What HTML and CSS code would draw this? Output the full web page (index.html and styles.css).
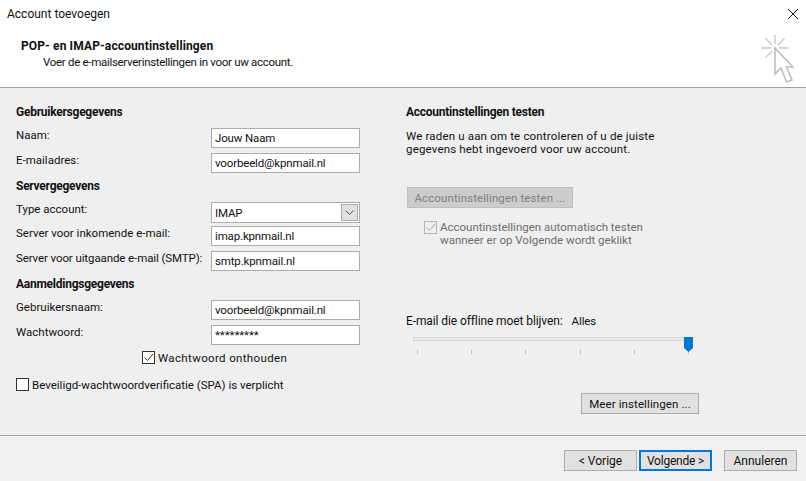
FILE: index.html
```html
<!DOCTYPE html>
<html lang="nl">
<head>
<meta charset="utf-8">
<title>Account toevoegen</title>
<link rel="stylesheet" href="styles.css">
</head>
<body>
<div class="dialog">
  <header class="top">
    <div class="titlebar">
      <span class="title">Account toevoegen</span>
      <svg class="close" width="10" height="10" viewBox="0 0 10 10"><path d="M0 0L10 10M10 0L0 10" stroke="#111" stroke-width="1" fill="none"/></svg>
    </div>
    <div class="intro">
      <div class="intro-text">
        <h1>POP- en IMAP-accountinstellingen</h1>
        <p>Voer de e-mailserverinstellingen in voor uw account.</p>
      </div>
      <svg class="cursor" width="34" height="50" viewBox="0 0 34 50">
        <path d="M1 14H11M19 14H28M15 1V10M5.500 4.500L12 11M24.500 4.500L18 11M5.500 23.500L12 17" stroke="#c4c4c4" stroke-width="1.300" fill="none"/>
        <path d="M15 14V40L21 34L26.500 48L32 46L26.500 33L33 33Z" stroke="#bdbdbd" stroke-width="1.600" fill="#fff"/>
      </svg>
    </div>
  </header>
  <main class="panel">
    <section class="left">
      <h2 class="first">Gebruikersgegevens</h2>
      <div class="row"><label>Naam:</label><div class="field">Jouw Naam</div></div>
      <div class="row gap5"><label>E-mailadres:</label><div class="field">voorbeeld@kpnmail.nl</div></div>
      <h2>Servergegevens</h2>
      <div class="row"><label>Type account:</label>
        <div class="field select"><span>IMAP</span>
          <span class="arrow"><svg width="9" height="5" viewBox="0 0 9 5"><path d="M0.500 0.500L4.500 4.500L8.500 0.500" stroke="#555" fill="none"/></svg></span>
        </div>
      </div>
      <div class="row gap3"><label>Server voor inkomende e-mail:</label><div class="field">imap.kpnmail.nl</div></div>
      <div class="row gap5"><label class="tight">Server voor uitgaande e-mail (SMTP):</label><div class="field">smtp.kpnmail.nl</div></div>
      <h2>Aanmeldingsgegevens</h2>
      <div class="row"><label>Gebruikersnaam:</label><div class="field">voorbeeld@kpnmail.nl</div></div>
      <div class="row gap5"><label>Wachtwoord:</label><div class="field stars">*********</div></div>
      <div class="check remember">
        <span class="box"><svg width="11" height="11" viewBox="0 0 11 11"><path d="M1.500 5.500L4.500 8.500L10 2" stroke="#333" fill="none"/></svg></span>
        <span class="check-text wide">Wachtwoord onthouden</span>
      </div>
      <div class="check spa">
        <span class="box"></span>
        <span class="check-text">Beveiligd-wachtwoordverificatie (SPA) is verplicht</span>
      </div>
    </section>
    <section class="right">
      <h2 class="first">Accountinstellingen testen</h2>
      <p class="desc">We raden u aan om te controleren of u de juiste<br>gegevens hebt ingevoerd voor uw account.</p>
      <div class="btn disabled test">Accountinstellingen testen ...</div>
      <div class="check auto">
        <span class="box"><svg width="11" height="11" viewBox="0 0 11 11"><path d="M1.500 5.500L4.500 8.500L10 2" stroke="#a8a8a8" fill="none"/></svg></span>
        <span>Accountinstellingen automatisch testen<br>wanneer er op Volgende wordt geklikt</span>
      </div>
      <div class="offline"><span class="offline-label">E-mail die offline moet blijven:</span><span class="offline-value">Alles</span></div>
      <div class="slider">
        <div class="track"></div>
        <svg class="thumb" width="9" height="15" viewBox="0 0 9 15"><path d="M0 0H9V11L4.500 15L0 11Z" fill="#0078d7"/></svg>
        <div class="ticks"><i></i><i></i><i></i><i></i><i></i><i></i></div>
      </div>
      <div class="more"><div class="btn more-btn">Meer instellingen ...</div></div>
    </section>
  </main>
  <footer class="bottom">
    <div class="btn nav">&lt; Vorige</div>
    <div class="btn nav primary">Volgende &gt;</div>
    <div class="btn nav cancel">Annuleren</div>
  </footer>
</div>
</body>
</html>
```
FILE: styles.css
```css
* { box-sizing: border-box; }
html, body { margin: 0; padding: 0; }
body {
  width: 806px;
  height: 481px;
  overflow: hidden;
  font-family: Roboto, "Noto Sans", "Liberation Sans", sans-serif;
  font-size: 11.5px;
  line-height: 16px;
  color: #111;
  background: #f0f0f0;
}
.dialog { display: flex; flex-direction: column; height: 481px; }

.top { height: 88px; background: #fff; border-bottom: 1px solid #a0a0a0; }
.titlebar { display: flex; justify-content: space-between; align-items: center; height: 28px; padding: 0 8px 0 7px; }
.title { font-size: 12px; }
.intro { display: flex; justify-content: space-between; }
.intro-text { padding: 10px 0 0 21px; }
.intro h1 { margin: 0; font-size: 12px; font-weight: 700; line-height: 16px; letter-spacing: 0.12px; }
.intro p { margin: 1px 0 0 22px; line-height: 15px; letter-spacing: -0.3px; }
.cursor { margin: 6px 12px 0 0; }

.panel { display: flex; height: 348px; background: #efefef; border-bottom: 1px solid #a0a0a0; }
.left { width: 360px; padding: 16px 0 0 16px; white-space: nowrap; }
.right { width: 446px; padding: 16px 0 0 46px; white-space: nowrap; }

h2 { margin: 5px 0 8px; font-size: 12px; font-weight: 700; line-height: 16px; letter-spacing: -0.25px; }
h2.first { margin-top: 0; }

.row { display: flex; justify-content: space-between; }
.gap5 { margin-top: 5px; }
.gap3 { margin-top: 3px; }
.row label { line-height: 15px; }
.tight { letter-spacing: -0.1px; }
.field {
  flex: none;
  width: 149px;
  height: 20px;
  padding: 0 3px;
  display: flex;
  align-items: center;
  letter-spacing: -0.15px;
  background: #fff;
  border: 1px solid #ababab;
}
.stars { letter-spacing: -0.1px; }
.select { height: 21px; justify-content: space-between; padding-right: 1px; }
.arrow { width: 17px; height: 17px; display: flex; align-items: center; justify-content: center; background: #e1e1e1; border: 1px solid #adadad; }

.check { display: flex; align-items: flex-start; gap: 3px; line-height: 13px; }
.check-text { padding-top: 1px; }
.wide { letter-spacing: 0.35px; }
.box { width: 13px; height: 13px; flex: none; display: flex; align-items: center; justify-content: center; background: #fff; border: 1px solid #333; }
.remember { margin: 6px 0 0 126px; }
.spa { margin-top: 13px; }
.auto { margin: 13px 0 0 18px; color: #6d6d6d; }
.auto .box { border-color: #b5b5b5; background: #efefef; }

.desc { margin: 10px 0 0; line-height: 13px; letter-spacing: 0.17px; }

.btn { height: 21px; display: flex; align-items: center; justify-content: center; letter-spacing: 0.1px; background: #e1e1e1; border: 1px solid #adadad; }
.disabled { background: #ccc; border-color: #bfbfbf; color: #808080; }
.test { width: 166px; margin: 31px 0 0 1px; }

.offline { margin-top: 66px; font-size: 12px; letter-spacing: -0.1px; }
.offline-label { margin-right: 9px; }
.offline-value { font-size: 11.5px; }
.slider { position: relative; width: 280px; margin: 8px 0 0 7px; height: 24px; }
.track { height: 4px; margin-top: 4px; background: #e7eae9; border: 1px solid #d6d6d6; }
.thumb { position: absolute; right: 0; top: 0; }
.ticks { display: flex; justify-content: space-between; margin: 9px 4px 0 4px; }
.ticks i { display: block; width: 1px; height: 4px; background: #bdbdbd; }

.more { display: flex; justify-content: flex-end; margin: 32px 107px 0 0; }
.more-btn { width: 118px; }

.bottom { flex: 1; display: flex; padding: 13px 9px 0 0; justify-content: flex-end; align-items: flex-start; background: #f0f0f0; border-top: 1px solid #fff; }
.nav { width: 73px; font-size: 12px; letter-spacing: 0; }
.primary { margin-left: 2px; border: 2px solid #0078d7; letter-spacing: -0.2px; }
.cancel { margin-left: 12px; }
```
